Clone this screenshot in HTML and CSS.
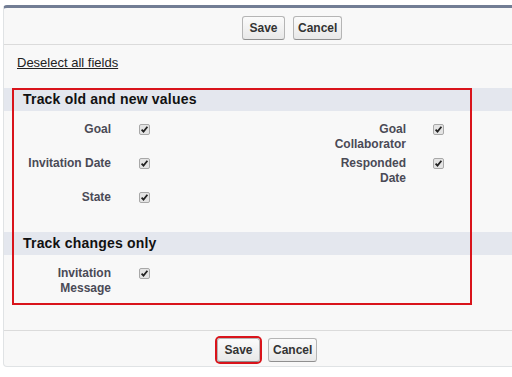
FILE: index.html
```html
<!DOCTYPE html>
<html lang="en">
<head>
    <meta charset="UTF-8">
    <meta name="viewport" content="width=device-width, initial-scale=1.0">
    <title>Field History Tracking</title>
    <link rel="stylesheet" href="styles.css">
</head>
<body>

    <div class="panel">

        <!-- Top Buttons -->
        <div class="button-bar top-bar">
            <button class="btn btn-save">Save</button>
            <button class="btn">Cancel</button>
        </div>

        <div class="deselect-row">
            <a href="#" class="deselect-link">Deselect all fields</a>
        </div>

        <!-- Track old and new values -->
        <h3 class="section-header">Track old and new values</h3>
        <div class="field-grid first-grid">
            <div class="field-label">Goal</div>
            <div class="field-check">
                <svg class="check" width="11" height="11" viewBox="0 0 11 11"><rect x="0.5" y="0.5" width="10" height="10" rx="1.5" fill="#e4e4e4" stroke="#a8a8a8"/><path d="M2.6 5.6 L4.5 7.6 L8.4 2.8" fill="none" stroke="#222" stroke-width="1.8"/></svg>
            </div>
            <div class="field-label">Goal Collaborator</div>
            <div class="field-check right">
                <svg class="check" width="11" height="11" viewBox="0 0 11 11"><rect x="0.5" y="0.5" width="10" height="10" rx="1.5" fill="#e4e4e4" stroke="#a8a8a8"/><path d="M2.6 5.6 L4.5 7.6 L8.4 2.8" fill="none" stroke="#222" stroke-width="1.8"/></svg>
            </div>

            <div class="field-label">Invitation Date</div>
            <div class="field-check">
                <svg class="check" width="11" height="11" viewBox="0 0 11 11"><rect x="0.5" y="0.5" width="10" height="10" rx="1.5" fill="#e4e4e4" stroke="#a8a8a8"/><path d="M2.6 5.6 L4.5 7.6 L8.4 2.8" fill="none" stroke="#222" stroke-width="1.8"/></svg>
            </div>
            <div class="field-label">Responded Date</div>
            <div class="field-check right">
                <svg class="check" width="11" height="11" viewBox="0 0 11 11"><rect x="0.5" y="0.5" width="10" height="10" rx="1.5" fill="#e4e4e4" stroke="#a8a8a8"/><path d="M2.6 5.6 L4.5 7.6 L8.4 2.8" fill="none" stroke="#222" stroke-width="1.8"/></svg>
            </div>

            <div class="field-label">State</div>
            <div class="field-check">
                <svg class="check" width="11" height="11" viewBox="0 0 11 11"><rect x="0.5" y="0.5" width="10" height="10" rx="1.5" fill="#e4e4e4" stroke="#a8a8a8"/><path d="M2.6 5.6 L4.5 7.6 L8.4 2.8" fill="none" stroke="#222" stroke-width="1.8"/></svg>
            </div>
        </div>

        <!-- Track changes only -->
        <h3 class="section-header">Track changes only</h3>
        <div class="field-grid last-grid">
            <div class="field-label">Invitation Message</div>
            <div class="field-check">
                <svg class="check" width="11" height="11" viewBox="0 0 11 11"><rect x="0.5" y="0.5" width="10" height="10" rx="1.5" fill="#e4e4e4" stroke="#a8a8a8"/><path d="M2.6 5.6 L4.5 7.6 L8.4 2.8" fill="none" stroke="#222" stroke-width="1.8"/></svg>
            </div>
        </div>

        <!-- Bottom Buttons -->
        <div class="button-bar bottom-bar">
            <button class="btn btn-save highlight">Save</button>
            <button class="btn">Cancel</button>
        </div>

        <!-- annotation box drawn over the two sections -->
        <div class="highlight-box"></div>
    </div>

</body>
</html>
```

FILE: styles.css
```css
html, body {
    overflow: hidden;
}

body {
    margin: 0;
    padding: 5px 0 0 3px;
    background-color: white;
    font-family: "Liberation Sans", Arial, sans-serif;
    color: #333;
}

.panel {
    position: relative;
    width: 577px;
    background-color: #f8f8f8;
    border: 1px solid #e0e3e5;
    border-top: 3px solid #727d94;
    border-radius: 4px;
}

.button-bar {
    display: flex;
    gap: 8px;
}

.top-bar {
    height: 37px;
    box-sizing: border-box;
    padding: 8px 0 0 238px;
    border-bottom: 1px solid #dbdbdb;
}

.bottom-bar {
    height: 36px;
    box-sizing: border-box;
    padding: 7px 0 0 213px;
    border-top: 1px solid #dbdbdb;
}

.btn {
    height: 24px;
    padding: 0 4px;
    font-family: "Liberation Sans", Arial, sans-serif;
    font-size: 12px;
    font-weight: bold;
    color: #333;
    background: linear-gradient(#fbfbfb, #e8e8e8);
    border: 1px solid #b5b5b5;
    border-bottom-color: #8f8f8f;
    border-radius: 3px;
    cursor: pointer;
}

.btn-save {
    width: 43px;
}

.btn.highlight {
    box-shadow: 0 0 0 2px #d9141b;
}

.deselect-row {
    height: 43px;
    box-sizing: border-box;
    padding: 9px 13px 0;
    line-height: 16px;
}

.deselect-link {
    font-size: 13px;
    color: #222;
    text-decoration: underline;
}

.section-header {
    margin: 0;
    height: 23px;
    padding-left: 19px;
    line-height: 23px;
    font-size: 14px;
    letter-spacing: 0.2px;
    font-weight: bold;
    color: #111;
    background-color: #e4e7ee;
}

.field-grid {
    display: grid;
    grid-template-columns: 107px 207px 88px auto;
    row-gap: 4px;
    padding-top: 11px;
}

.first-grid {
    padding-bottom: 27px;
}

.last-grid {
    padding-bottom: 34px;
}

.field-label {
    padding-left: 17px;
    text-align: right;
    font-size: 12px;
    font-weight: bold;
    line-height: 15px;
    color: #4a4a56;
}

.field-grid .field-label:nth-child(4n+3) {
    padding-left: 0;
}

.field-check {
    padding: 2px 0 0 28px;
}

.field-check.right {
    padding-left: 27px;
}

.check {
    display: block;
}

.highlight-box {
    position: absolute;
    left: 8px;
    top: 80px;
    width: 460px;
    height: 217px;
    box-sizing: border-box;
    border: 2px solid #d9141b;
}
```
